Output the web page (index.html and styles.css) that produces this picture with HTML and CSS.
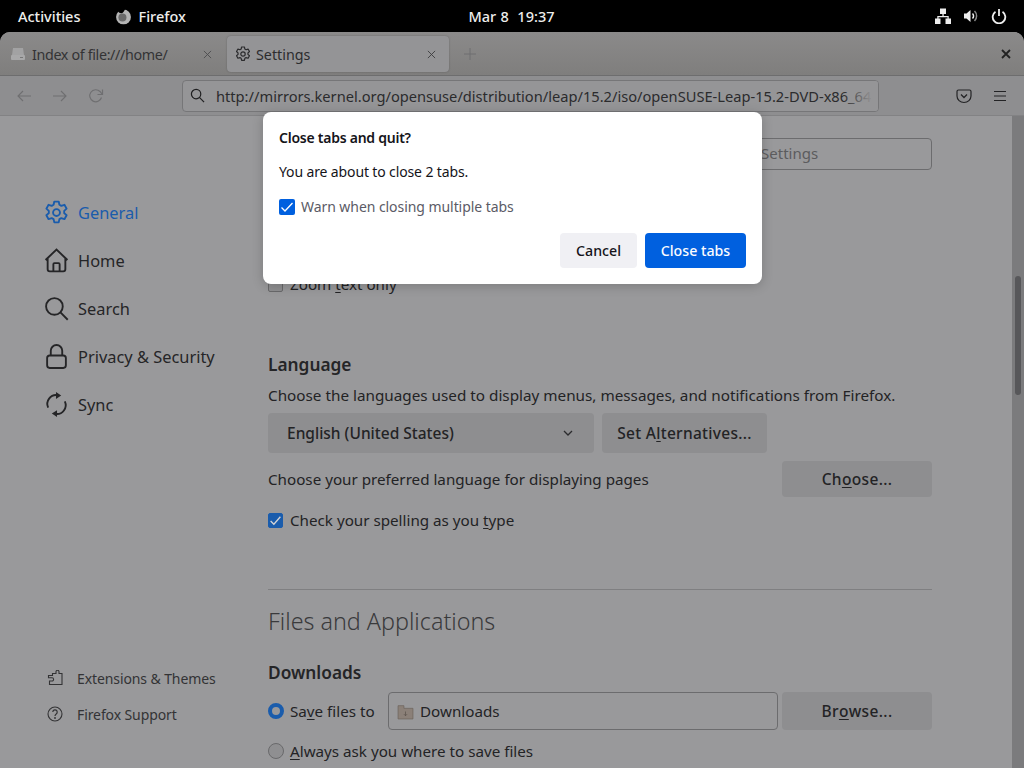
FILE: index.html
```html
<!DOCTYPE html>
<html lang="en">
<head>
<meta charset="utf-8">
<title>Settings</title>
<link rel="stylesheet" href="styles.css">
</head>
<body>
<header class="topbar">
  <div class="top-left">
    <span>Activities</span>
    <span class="app">
      <svg class="ff" viewBox="0 0 16 16"><circle cx="8" cy="8.400" r="7" fill="#b4b4b4"/><circle cx="7" cy="9" r="3.800" fill="#6a6a6a"/><path d="M2.500 1.500C2.500 4 4 5 6 5c1.500 0 2.500-1.500 3.500-4C7 .5 4.500.5 2.500 1.500z" fill="#000"/></svg>
      Firefox
    </span>
  </div>
  <div class="clock">Mar 8&nbsp;&nbsp;19:37</div>
  <div class="top-right">
    <svg viewBox="0 0 16 16" class="ti"><path d="M5 .5h6V6H8.700v2h5v2.500H16V16h-5.500v-5.500h2V9.200H3.500v1.300h2V16H0v-5.500h2.300V8h5.100V6H5z" fill="#eee"/></svg>
    <svg viewBox="0 0 16 16" class="ti"><path d="M1 5.500h2.500L7.500 2v12L3.500 10.500H1z" fill="#eee"/><path d="M9.500 5.500a3.500 3.500 0 0 1 0 5" fill="none" stroke="#eee" stroke-width="1.500"/><path d="M11.500 3a7 7 0 0 1 0 10" fill="none" stroke="#888" stroke-width="1.500"/></svg>
    <svg viewBox="0 0 16 16" class="ti"><path d="M4.500 3.800a6.300 6.300 0 1 0 7 0" fill="none" stroke="#eee" stroke-width="1.800"/><path d="M8 1v7" stroke="#eee" stroke-width="1.800"/></svg>
  </div>
</header>

<div class="window">
  <div class="tabbar">
    <div class="tab tab-first">
      <svg class="tab-ico" viewBox="0 0 16 16"><path d="M2 9l1-7h10l1 7z" fill="#a2a2a3"/><rect x="1" y="9" width="14" height="5" rx="1" fill="#a8a8a9"/><rect x="10" y="11" width="3" height="1" fill="#777"/></svg>
      <span class="tab-title">Index of file:///home/</span>
      <svg class="tab-x" viewBox="0 0 10 10"><path d="M1 1l8 8M9 1l-8 8" stroke="#4c4c4e" stroke-width="1"/></svg>
    </div>
    <div class="tab tab-on">
      <svg class="tab-ico" viewBox="0 0 24 24"><use href="#gear"/></svg>
      <span class="tab-title">Settings</span>
      <svg class="tab-x" viewBox="0 0 10 10"><path d="M1 1l8 8M9 1l-8 8" stroke="#3c3c3e" stroke-width="1"/></svg>
    </div>
    <svg class="plus" viewBox="0 0 12 12"><path d="M6 0v12M0 6h12" stroke="#6e6e70" stroke-width="1"/></svg>
    <svg class="win-x" viewBox="0 0 10 10"><path d="M1 1l8 8M9 1l-8 8" stroke="#222" stroke-width="1.800"/></svg>
  </div>

  <div class="toolbar">
    <svg class="nav" viewBox="0 0 16 16"><path d="M15 8H2M7 3L2 8l5 5" fill="none" stroke="#6f6f71" stroke-width="1.100"/></svg>
    <svg class="nav" viewBox="0 0 16 16"><path d="M1 8h13M9 3l5 5-5 5" fill="none" stroke="#6f6f71" stroke-width="1.100"/></svg>
    <svg class="nav" viewBox="0 0 16 16"><path d="M13.500 9.500A6 6 0 1 1 12 3.500L14 6" fill="none" stroke="#6f6f71" stroke-width="1.200"/><path d="M14.500 1.500V6.500H9.500" fill="none" stroke="#6f6f71" stroke-width="1.200"/></svg>
    <div class="url">
      <svg class="url-ico" viewBox="0 0 16 16"><circle cx="6.500" cy="6.500" r="5" fill="none" stroke="#1f1f21" stroke-width="1.300"/><path d="M10 10l5 5" stroke="#1f1f21" stroke-width="1.300"/></svg>
      <span class="url-text">http://mirrors.kernel.org/opensuse/distribution/leap/15.2/iso/openSUSE-Leap-15.2-DVD-x86_64.</span>
      <span class="url-fade"></span>
    </div>
    <div class="tool-right">
      <svg class="tr-ico" viewBox="0 0 16 16"><path d="M2.500 2h11A1.500 1.500 0 0 1 15 3.500V8A7 6.500 0 0 1 1 8V3.500A1.500 1.500 0 0 1 2.500 2z" fill="none" stroke="#232325" stroke-width="1.200"/><path d="M5 6.500l3 3 3-3" fill="none" stroke="#232325" stroke-width="1.300"/></svg>
      <svg class="tr-ico" viewBox="0 0 16 16"><path d="M2 3.500h12M2 8h12M2 12.500h12" stroke="#232325" stroke-width="1.200"/></svg>
    </div>
  </div>

  <div class="content">
    <nav class="sidebar">
      <ul class="cats">
        <li class="cat cat-on"><svg class="cat-ico" viewBox="0 0 24 24"><use href="#gear"/></svg>General</li>
        <li class="cat">
          <svg class="cat-ico" viewBox="0 0 24 24"><path d="M1.500 11.500L12 1.500l10.500 10M3.500 10v10.500a2 2 0 0 0 2 2h13a2 2 0 0 0 2-2V10M9 22.500V15.500a1 1 0 0 1 1-1h4a1 1 0 0 1 1 1v7" fill="none" stroke="currentColor" stroke-width="1.800"/></svg>Home</li>
        <li class="cat">
          <svg class="cat-ico" viewBox="0 0 24 24"><circle cx="10" cy="10" r="8" fill="none" stroke="currentColor" stroke-width="1.800"/><path d="M15.800 15.800l7 7" stroke="currentColor" stroke-width="1.800"/></svg>Search</li>
        <li class="cat">
          <svg class="cat-ico" viewBox="0 0 24 24"><rect x="3" y="11" width="18" height="12" rx="2.500" fill="none" stroke="currentColor" stroke-width="1.800"/><path d="M6.500 11V6.500a5.500 5.500 0 0 1 11 0V11" fill="none" stroke="currentColor" stroke-width="1.800"/></svg>Privacy &amp; Security</li>
        <li class="cat">
          <svg class="cat-ico" viewBox="0 0 24 24"><path d="M4 15a8.500 8.500 0 0 1 9-12M20 9a8.500 8.500 0 0 1-9 12" fill="none" stroke="currentColor" stroke-width="1.800"/><path d="M11.500 0l5 3.300-5 3.300zM12.500 24l-5-3.300 5-3.300z" fill="currentColor"/></svg>Sync</li>
      </ul>
      <ul class="foot">
        <li class="foot-item"><svg class="foot-ico" viewBox="0 0 16 16"><path d="M5.500 3.500H9V1.800a1.500 1.500 0 0 1 3 0V3.500H15V14.500H2.500V11H5a1.300 1.300 0 0 0 0-3.200H1.500V5.500h4z" fill="none" stroke="currentColor" stroke-width="1.100"/></svg>Extensions &amp; Themes</li>
        <li class="foot-item"><svg class="foot-ico" viewBox="0 0 16 16"><circle cx="8" cy="8" r="7" fill="none" stroke="currentColor" stroke-width="1.100"/><path d="M5.800 6a2.200 2.200 0 1 1 3.400 1.900C8.300 8.500 8 9 8 10" fill="none" stroke="currentColor" stroke-width="1.200"/><circle cx="8" cy="12" r=".9" fill="currentColor"/></svg>Firefox Support</li>
      </ul>
    </nav>

    <main class="main">
      <div class="search-row"><div class="search-box">Find in Settings</div></div>
      <div class="zoom-row">
        <span class="check"></span><span>Zoom <u>t</u>ext only</span>
      </div>
      <h2 class="sub lang-h">Language</h2>
      <p class="line lang-p">Choose the languages used to display menus, messages, and notifications from Firefox.</p>
      <div class="lang-row">
        <div class="select">English (United States)
          <svg class="chev" viewBox="0 0 10 6"><path d="M1 1l4 4 4-4" fill="none" stroke="#2b2b2d" stroke-width="1.300"/></svg>
        </div>
        <div class="btn alt">Set A<u>l</u>ternatives...</div>
      </div>
      <div class="pref-row">
        <span>Choose your preferred language for displaying pages</span>
        <div class="btn choose">Ch<u>o</u>ose...</div>
      </div>
      <div class="spell-row">
        <span class="check check-on"><svg viewBox="0 0 12 12"><path d="M1.500 6.500l3 3 6-7" fill="none" stroke="#d4d4d6" stroke-width="1.200"/></svg></span>
        <span>Check your spelling as you <u>t</u>ype</span>
      </div>
      <hr class="rule">
      <h1 class="section">Files and Applications</h1>
      <h2 class="sub dl-h">Downloads</h2>
      <div class="save-row">
        <span class="radio radio-on"></span>
        <span class="save-label">Sa<u>v</u>e files to</span>
        <div class="path">
          <svg class="folder" viewBox="0 0 16 16"><path d="M1 2.500h5.500V5H15v10H1z" fill="#8b8078" stroke="#6e655e" stroke-width=".7"/><path d="M8 8v4M6.500 10.500L8 12l1.500-1.500" fill="none" stroke="#5a524c" stroke-width=".7"/></svg>
          Downloads
        </div>
        <div class="btn browse">Br<u>o</u>wse...</div>
      </div>
      <div class="ask-row">
        <span class="radio"></span>
        <span><u>A</u>lways ask you where to save files</span>
      </div>
    </main>

    <div class="scrollbar"><div class="thumb"></div></div>
  </div>
</div>

<section class="dialog">
  <h3 class="dlg-title">Close tabs and quit?</h3>
  <p class="dlg-text">You are about to close 2 tabs.</p>
  <div class="dlg-check">
    <span class="dlg-box"><svg viewBox="0 0 16 16"><path d="M2.500 8.500l3.500 3.500 7.500-8" fill="none" stroke="#fff" stroke-width="1.300"/></svg></span>
    <span>Warn when closing multiple tabs</span>
  </div>
  <div class="dlg-actions">
    <div class="dlg-btn">Cancel</div>
    <div class="dlg-btn dlg-primary">Close tabs</div>
  </div>
</section>

<svg class="defs" width="0" height="0">
  <defs>
    <g id="gear" fill="none" stroke="currentColor" stroke-width="1.800" stroke-linejoin="round">
      <path d="M9.900 1.500h4.200l.7 3.100 1.800 1 3-1 2.100 3.700-2.300 2.100v2.200l2.300 2.100-2.100 3.700-3-1-1.800 1-.7 3.100H9.900l-.7-3.100-1.800-1-3 1-2.100-3.700 2.300-2.100v-2.200L2.300 8.300l2.100-3.700 3 1 1.800-1z"/>
      <circle cx="12" cy="12" r="3.300"/>
    </g>
  </defs>
</svg>
</body>
</html>
```
FILE: styles.css
```css
* { box-sizing: border-box; }
html, body { margin: 0; height: 100%; overflow: hidden; }
body {
  width: 1024px;
  height: 768px;
  background: #000;
  font-family: "Noto Sans", sans-serif;
  font-size: 15.2px;
  color: #232325;
  position: relative;
}
ul { list-style: none; margin: 0; padding: 0; }
h1, h2, h3, p { margin: 0; font-weight: normal; }
u { text-underline-offset: 2px; text-decoration-thickness: 1px; }
.defs { position: absolute; }

/* Top bar */
.topbar {
  height: 32px;
  display: grid;
  grid-template-columns: 1fr auto 1fr;
  align-items: center;
  padding: 0 17px 0 18px;
  color: #eeeeec;
  font-size: 14.5px;
  font-weight: 500;
}
.top-left { display: flex; align-items: center; gap: 35px; }
.app { display: flex; align-items: center; gap: 6px; }
.ff { width: 17px; height: 17px; }
.clock { text-align: center; padding-right: 2px; word-spacing: .5px; }
.top-right { display: flex; justify-content: flex-end; align-items: center; gap: 12px; }
.ti { width: 16px; height: 16px; }

/* Window */
.window {
  height: 736px;
  border-radius: 10px 10px 0 0;
  overflow: hidden;
  background: #99999b;
  display: flex;
  flex-direction: column;
}
.tabbar {
  height: 44px;
  flex: none;
  background: linear-gradient(#8b8a8a, #7f7e7d);
  border-bottom: 1px solid #6d6d6e;
  display: flex;
  align-items: center;
  padding: 4px 0 3px;
  color: #333335;
  position: relative;
}
.tab {
  width: 222px;
  height: 36px;
  display: flex;
  align-items: center;
  padding: 0 11px 0 8px;
  border-radius: 4px;
  margin-right: 3px;
  font-size: 14.3px;
}
.tab-first { margin-right: 5px; padding: 0 8px 0 10px; }
.tab-first .tab-title { letter-spacing: -.35px; }
.tab-first .tab-ico { margin-right: 6px; }
.tab-on { background: #949496; box-shadow: 0 0 2px rgba(0,0,0,.25); color: #2c2c2e; }
.tab-ico { width: 16px; height: 16px; margin-right: 5px; flex: none; }
.tab-title { flex: 1; white-space: nowrap; overflow: hidden; }
.tab-x { width: 9px; height: 9px; margin-right: 2px; flex: none; }
.plus { width: 12px; height: 12px; margin-left: 12px; }
.win-x { width: 10px; height: 10px; position: absolute; right: 13px; top: 17px; }

.toolbar {
  height: 40px;
  flex: none;
  background: #8e8e90;
  border-bottom: 1px solid #828284;
  display: flex;
  align-items: center;
  padding: 0 16px 0 16px;
}
.nav { width: 16px; height: 16px; margin-right: 20px; flex: none; }
.nav:nth-child(3) { margin-right: 78px; }
.url {
  width: 697px;
  height: 32px;
  border: 1px solid #767678;
  border-radius: 4px;
  background: #959597;
  display: flex;
  align-items: center;
  padding: 0 0 0 7px;
  position: relative;
  overflow: hidden;
  flex: none;
}
.url-ico { width: 15px; height: 15px; margin-right: 11px; flex: none; }
.url-text { white-space: nowrap; font-size: 14.65px; color: #2b2b2d; }
.url-fade {
  position: absolute; right: 0; top: 0; bottom: 0; width: 36px;
  background: linear-gradient(to right, rgba(149,149,151,0), #959597 85%);
}
.tool-right { margin-left: auto; display: flex; gap: 20px; align-items: center; }
.tr-ico { width: 16px; height: 16px; }

/* Content */
.content { flex: 1; display: flex; min-height: 0; overflow: hidden; background: #99999b; }
.sidebar {
  width: 268px;
  flex: none;
  display: flex;
  flex-direction: column;
  padding-left: 44px;
}
.cats { padding-top: 72px; }
.cat {
  height: 48px;
  display: flex;
  align-items: center;
  gap: 9px;
  font-size: 16.4px;
  color: #252527;
}
.cat-on { color: #1a5cac; }
.cat-ico { width: 25px; height: 25px; flex: none; }
.foot { margin-top: auto; padding-bottom: 36px; }
.foot-item {
  height: 36px;
  display: flex;
  align-items: center;
  gap: 14px;
  padding-left: 3px;
  font-size: 14px;
  letter-spacing: -.1px;
  color: #333335;
}
.foot-ico { width: 16px; height: 16px; flex: none; }

.main {
  width: 664px;
  flex: none;
  padding-top: 22px;
}
.search-row { display: flex; justify-content: flex-end; height: 32px; }
.search-box {
  width: 290px;
  height: 32px;
  border: 1px solid #6c6c6e;
  border-radius: 4px;
  padding-left: 67px;
  line-height: 28px;
  color: #5c5c5e;
  font-size: 15px;
}
.zoom-row { margin-top: 101px; height: 26px; display: flex; align-items: center; gap: 7px; }
.check {
  width: 15px; height: 15px;
  border: 1px solid #69696b;
  border-radius: 2px;
  background: #8f8f91;
  display: inline-flex;
  flex: none;
}
.check-on { background: #1a5cac; border-color: #1a5cac; }
.sub { font-size: 17.3px; font-weight: 600; color: #252527; line-height: 24px; padding-top: 2px; }
.lang-h { margin-top: 54px; }
.lang-p { margin-top: 5px; line-height: 26px; font-size: 15.27px; }
.lang-row { display: flex; gap: 8px; margin-top: 5px; height: 40px; }
.select {
  width: 326px;
  background: #8e8e90;
  border-radius: 4px;
  display: flex;
  align-items: center;
  justify-content: space-between;
  padding: 0 21px 0 19px;
  font-size: 15.5px;
  font-weight: 500;
}
.chev { width: 10px; height: 6px; }
.btn {
  background: #8e8e90;
  border-radius: 4px;
  display: flex;
  align-items: center;
  justify-content: center;
  font-size: 15.5px;
  font-weight: 500;
  letter-spacing: .35px;
}
.alt { width: 165px; letter-spacing: .28px; }
.pref-row { display: flex; justify-content: space-between; align-items: center; margin-top: 8px; height: 36px; }
.choose { width: 150px; height: 36px; }
.spell-row { margin-top: 11px; height: 24px; display: flex; align-items: center; gap: 7px; }
.rule { margin: 57px 0 0; border: 0; border-top: 1px solid #7f7f81; }
.section { font-size: 23.3px; font-weight: 300; line-height: 32px; margin-top: 15px; color: #3a3a3c; }
.dl-h { margin-top: 22px; }
.save-row { display: flex; align-items: center; height: 38px; margin-top: 7px; }
.radio {
  width: 16px; height: 16px;
  border-radius: 50%;
  border: 1px solid #69696b;
  background: #8f8f91;
  flex: none;
}
.radio-on { border: 4px solid #1a5cac; background: #99999b; }
.save-label { margin-left: 6px; width: 98px; white-space: nowrap; }
.path {
  width: 390px;
  height: 38px;
  border: 1px solid #6c6c6e;
  border-radius: 4px;
  display: flex;
  align-items: center;
  gap: 6px;
  padding-left: 8px;
}
.folder { width: 17px; height: 17px; }
.browse { width: 150px; height: 38px; margin-left: 4px; }
.ask-row { display: flex; align-items: center; gap: 6px; height: 26px; margin-top: 8px; }

.scrollbar {
  width: 12px;
  margin-left: auto;
  background: #7b7b7d;
  flex: none;
  position: relative;
}
.thumb {
  position: absolute;
  left: 3px;
  top: 160px;
  width: 6px;
  height: 119px;
  border-radius: 3px;
  background: #57575a;
}

/* Dialog */
.dialog {
  position: absolute;
  left: 263px;
  top: 112px;
  width: 499px;
  height: 172px;
  background: #fff;
  border-radius: 8px;
  padding: 16px 16px 16px;
  color: #15141a;
  font-size: 14px;
  letter-spacing: -.13px;
  box-shadow: 0 2px 12px rgba(0,0,0,.2);
  display: flex;
  flex-direction: column;
}
.dlg-title { font-size: 14px; font-weight: 600; line-height: 20px; letter-spacing: -.25px; }
.dlg-text { margin-top: 14px; line-height: 20px; }
.dlg-check { margin-top: 15px; display: flex; align-items: center; gap: 6px; line-height: 20px; color: #5b5b66; letter-spacing: -.06px; }
.dlg-box { width: 16px; height: 16px; border-radius: 2px; background: #0060df; display: inline-flex; flex: none; }
.dlg-actions { margin-top: auto; display: flex; justify-content: flex-end; gap: 8px; }
.dlg-btn {
  height: 35px;
  width: 77px;
  padding-bottom: 1px;
  background: #f0f0f4;
  border-radius: 4px;
  display: flex;
  align-items: center;
  justify-content: center;
  font-size: 14.2px;
  letter-spacing: 0;
  font-weight: 500;
}
.dlg-primary { width: 101px; background: #0060df; color: #fbfbfe; }
```
